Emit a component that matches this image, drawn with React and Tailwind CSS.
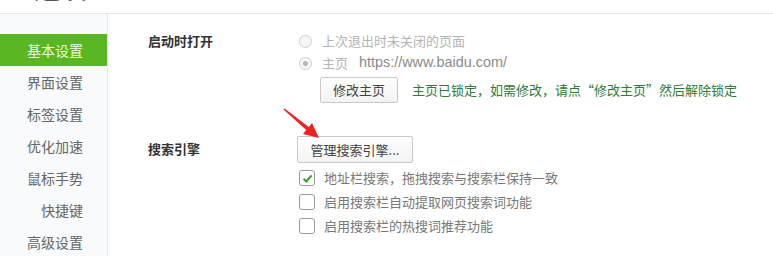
import React from 'react';

const font = { fontFamily: '"Noto Sans CJK SC", "Noto Sans", "Liberation Sans", sans-serif' };

const navItems = ['基本设置', '界面设置', '标签设置', '优化加速', '鼠标手势', '快捷键', '高级设置'];

function Radio({ checked }) {
  return (
    <span className="flex h-[13px] w-[13px] items-center justify-center rounded-full border border-[#cfcfcf] bg-[#f6f6f6]">
      {checked && <span className="h-[5px] w-[5px] rounded-full bg-[#b5b5b5]" />}
    </span>
  );
}

function Checkbox({ checked }) {
  return (
    <span className="flex h-[16px] w-[16px] items-center justify-center rounded-[3px] border border-[#9a9a9a] bg-white">
      {checked && (
        <svg width="11" height="11" viewBox="0 0 11 11">
          <path d="M1.5 5.8 L4.3 8.5 L9.6 2.3" fill="none" stroke="#3f9a2c" strokeWidth="2" />
        </svg>
      )}
    </span>
  );
}

function Button({ children, className }) {
  return (
    <button className={`rounded-[2px] border border-[#c9c9c9] bg-gradient-to-b from-white to-[#f3f3f3] text-[13px] text-[#444] ${className}`}>
      {children}
    </button>
  );
}

export default function App() {
  return (
    <div className="relative h-[256px] w-[773px] overflow-hidden bg-white" style={font}>
      {/* clipped window title */}
      <div className="h-[14px] overflow-hidden border-b border-[#e4e7e9] bg-white">
        <div className="-mt-[28px] pl-[34px] text-[26px] leading-[32px] text-[#555]">选项</div>
      </div>

      <div className="flex h-[242px]">
        <div className="w-[108px] shrink-0 border-r border-[#e3e6e8] bg-[#f8fafb] pt-[20px]">
          {navItems.map((item, i) => (
            <div
              key={item}
              className={`h-[32px] pr-[24px] text-right text-[14px] leading-[32px] ${
                i === 0 ? 'bg-[#5bb624] text-[#eaf6df]' : 'text-[#666]'
              }`}
            >
              {item}
            </div>
          ))}
        </div>

        <div className="flex-1 pl-[40px] pt-[16px] text-[13px]">
          {/* startup */}
          <div className="flex">
            <div className="w-[150px] shrink-0 text-[13px] font-bold leading-[22px] text-[#333]">启动时打开</div>
            <div>
              <div className="flex h-[22px] items-center">
                <div className="ml-[1px]"><Radio /></div>
                <span className="ml-[10px] text-[#b4b4b4]">上次退出时未关闭的页面</span>
              </div>
              <div className="flex h-[22px] items-center">
                <div className="ml-[1px]"><Radio checked /></div>
                <span className="ml-[10px] text-[#b4b4b4]">主页</span>
                <span className="ml-[11px] text-[14.4px] text-[#8a8a8a]" style={{ fontFamily: '"Liberation Sans", Arial, sans-serif' }}>https://www.baidu.com/</span>
              </div>
              <div className="mt-[3px] flex items-center">
                <Button className="ml-[22px] h-[26px] w-[78px]">修改主页</Button>
                <span className="ml-[14px] text-[#2f7a3a]">主页已锁定，如需修改，请点“修改主页”然后解除锁定</span>
              </div>
            </div>
          </div>

          {/* search engine */}
          <div className="mt-[33px] flex">
            <div className="w-[149px] shrink-0 text-[13px] font-bold leading-[26px] text-[#333]">搜索引擎</div>
            <div>
              <Button className="h-[27px] w-[116px]">管理搜索引擎...</Button>
              <div className="mt-[3px]">
                {[
                  ['地址栏搜索，拖拽搜索与搜索栏保持一致', true],
                  ['启用搜索栏自动提取网页搜索词功能', false],
                  ['启用搜索栏的热搜词推荐功能', false],
                ].map(([label, checked]) => (
                  <div key={label} className="flex h-[24px] items-center">
                    <div className="ml-[2px]"><Checkbox checked={checked} /></div>
                    <span className="ml-[9px] text-[#777]">{label}</span>
                  </div>
                ))}
              </div>
            </div>
          </div>
        </div>
      </div>

      {/* red annotation arrow */}
      <svg className="absolute left-[280px] top-[104px]" width="44" height="40" viewBox="0 0 44 40">
        <polygon points="3.5,5.5 26.2,26 23,30 39,34 32,19 28.8,22.9 4.5,4.5" fill="#ee2222" />
      </svg>
    </div>
  );
}
